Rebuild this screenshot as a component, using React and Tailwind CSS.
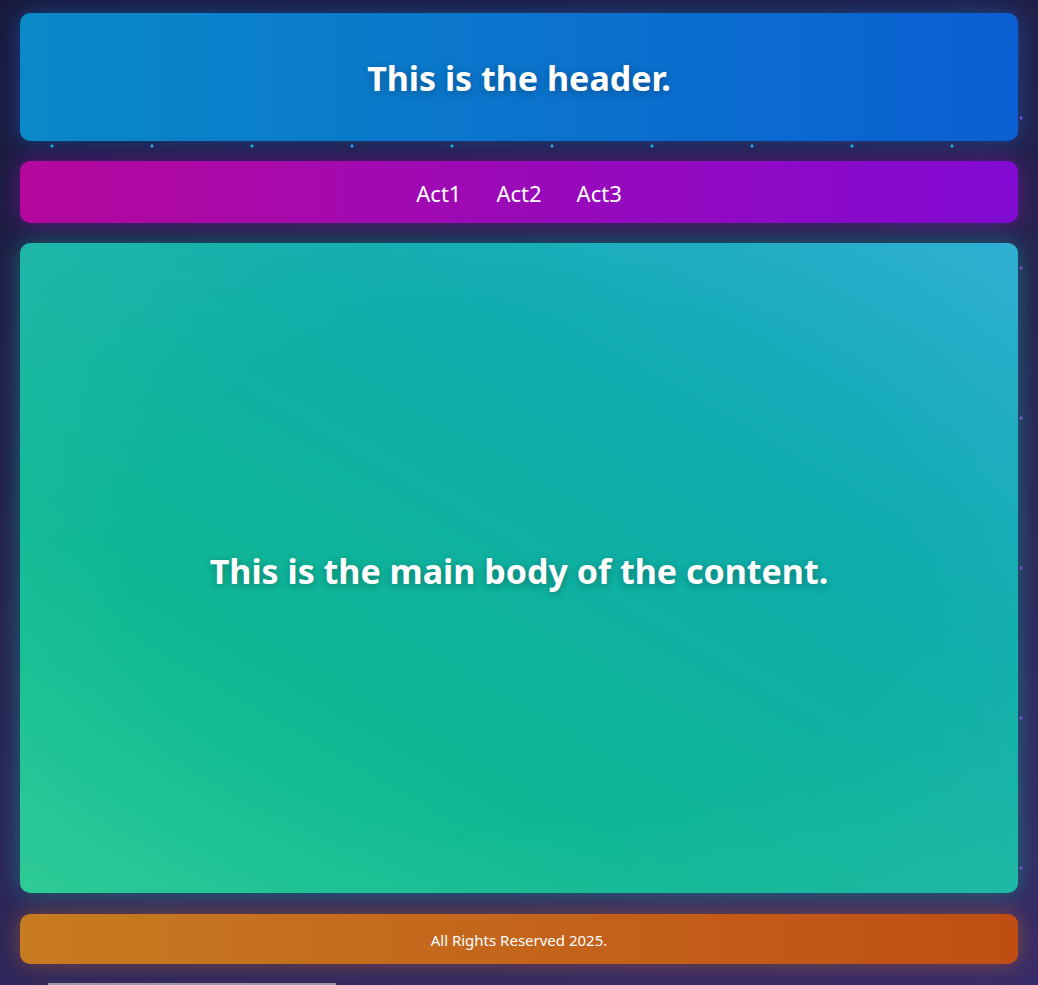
export default function App() {
  return (
    <div
      className="relative min-h-screen w-full flex flex-col px-5 pt-[13px] pb-[19px] bg-[radial-gradient(circle_at_50px_50px,#22b8e0_1.3px,transparent_1.8px),radial-gradient(circle_at_75px_75px,#8b3fd8_1.3px,transparent_1.8px),linear-gradient(160deg,#191a3d_0%,#26224f_45%,#382c68_100%)] [background-size:100px_100px,150px_150px,100%_100%] [background-position:2px_-4px,46px_43px,0_0]"
      style={{ fontFamily: '"Noto Sans", "Open Sans", sans-serif' }}
    >
      <div className="flex flex-col gap-5">
        <header className="h-[128px] pt-[3px] rounded-[10px] flex items-center justify-center bg-[linear-gradient(90deg,#0a89c8,#0b5fd2)] shadow-[0_0_22px_rgba(20,120,220,0.45)]">
          <h1 className="text-[34px] font-bold text-white [text-shadow:0_2px_8px_rgba(0,0,0,0.3)]">
            This is the header.
          </h1>
        </header>
        <nav className="h-[62px] pt-[3px] rounded-[10px] flex items-center justify-center gap-[35px] bg-[linear-gradient(90deg,#b5089d,#810ad3)] shadow-[0_0_22px_rgba(170,20,200,0.45)]">
          <span className="text-[22px] text-white">Act1</span>
          <span className="text-[22px] text-white">Act2</span>
          <span className="text-[22px] text-white">Act3</span>
        </nav>
        <main className="h-[650px] pt-[7px] rounded-[10px] flex items-center justify-center bg-[radial-gradient(ellipse_at_center,transparent_55%,rgba(255,255,255,0.07)_100%),linear-gradient(30deg,#20c890_0%,#0fb894_30%,#0eadaa_65%,#20a9d0_100%)] shadow-[0_0_24px_rgba(16,190,170,0.45)]">
          <h2 className="text-[34px] font-bold text-white [text-shadow:0_2px_8px_rgba(0,0,0,0.3)]">
            This is the main body of the content.
          </h2>
        </main>
        <footer className="mt-px h-[50px] pt-[2px] rounded-[10px] flex items-center justify-center bg-[linear-gradient(90deg,#c77b21,#c04e14)] shadow-[0_0_22px_rgba(210,110,30,0.45)]">
          <p className="text-[15px] text-white">All Rights Reserved 2025.</p>
        </footer>
      </div>
      <div className="absolute bottom-0 left-[48px] w-[288px] h-[2px] bg-[#9a9aa8]" />
    </div>
  );
}
